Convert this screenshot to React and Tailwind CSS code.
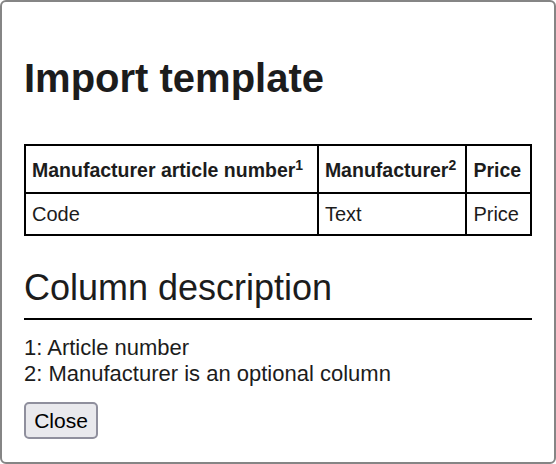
import React from 'react';

const columns = [
  { label: 'Manufacturer article number', note: 1, value: 'Code', width: 'w-[294px]' },
  { label: 'Manufacturer', note: 2, value: 'Text', width: 'w-[149px]' },
  { label: 'Price', value: 'Price', width: 'w-[65px]' },
];

const notes = ['1: Article number', '2: Manufacturer is an optional column'];

const App = () => {
  return (
    <div className="w-[556px] h-[464px] bg-white font-['Liberation_Sans',Arial,sans-serif] text-[#1c1c1c]">
      <div className="h-full border-2 border-[#858585] rounded-[6px] px-[22px] pt-[53px]">
        {/* Header */}
        <h1 className="text-[40px] leading-[46px] font-bold">Import template</h1>

        {/* Template table */}
        <table className="mt-[43px] w-[508px] border-collapse border-2 border-black">
          <thead>
            <tr className="h-[48px]">
              {columns.map((col) => (
                <th
                  key={col.label}
                  className={`${col.width} border-2 border-black px-[6px] pt-[3px] text-left text-[19.5px] font-bold whitespace-nowrap`}
                >
                  {col.label}
                  {col.note && <sup className="text-[14px]">{col.note}</sup>}
                </th>
              ))}
            </tr>
          </thead>
          <tbody>
            <tr className="h-[42px]">
              {columns.map((col) => (
                <td key={col.label} className="border-2 border-black px-[6px] text-[20px]">
                  {col.value}
                </td>
              ))}
            </tr>
          </tbody>
        </table>

        {/* Column description */}
        <h2 className="mt-[32px] pb-[10px] border-b-2 border-black text-[36px] leading-[40px]">
          Column description
        </h2>
        <div className="mt-[15px] text-[22px] leading-[26px]">
          {notes.map((n) => (
            <p key={n}>{n}</p>
          ))}
        </div>

        <button className="mt-[15px] w-[74px] h-[37px] bg-[#e9e9ed] border-2 border-[#8f8f9d] rounded-[5px] text-[21px] text-black">
          Close
        </button>
      </div>
    </div>
  );
};

export default App;
